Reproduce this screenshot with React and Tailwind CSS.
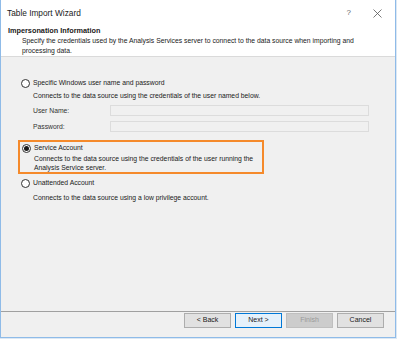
import React from 'react';

function Radio({ checked }) {
    return (
        <span className="w-[9px] h-[9px] rounded-full border border-[#333333] bg-white flex items-center justify-center shrink-0">
            {checked && <span className="w-[5px] h-[5px] rounded-full bg-[#1a1a1a]"></span>}
        </span>
    );
}

function Btn({ children, primary, disabled }) {
    const cls = primary
        ? 'border-[#0078d7] bg-[#e5f1fb] text-[#1a1a1a]'
        : disabled
            ? 'border-[#bfbfbf] bg-[#cccccc] text-[#9a9a9a]'
            : 'border-[#adadad] bg-[#e1e1e1] text-[#1a1a1a]';
    return (
        <div className={`w-[47px] h-[15px] border flex items-center justify-center text-[7px] ${cls}`}>{children}</div>
    );
}

export default function App() {
    return (
        <div className="w-[397px] h-[339px] bg-[#dce8f4] overflow-hidden" style={{ fontFamily: '"Liberation Sans", Arial, sans-serif' }}>
            <div className="w-[396px] h-[338px] border-l border-r border-b border-[#8fbbe8] bg-[#f0f0f0] flex flex-col text-[#1a1a1a]">
                {/* title */}
                <div className="bg-white h-[26px] flex items-center px-[6px] shrink-0">
                    <span className="text-[8.3px] text-[#1a1a1a]">Table Import Wizard</span>
                    <span className="ml-auto text-[8px] text-[#666] mr-[22px]">?</span>
                    <svg width="9" height="9" viewBox="0 0 9 9" className="mr-[7px]">
                        <path d="M0.5 0.5 L8.5 8.5 M8.5 0.5 L0.5 8.5" stroke="#555" strokeWidth="0.8" fill="none" />
                    </svg>
                </div>
                {/* header */}
                <div className="bg-white h-[31px] border-b border-[#dadada] pl-[7px] shrink-0">
                    <div className="text-[7.3px] font-bold leading-[10px]">Impersonation Information</div>
                    <div className="pl-[14px] w-[356px] text-[6.8px] leading-[10px]">
                        Specify the credentials used by the Analysis Services server to connect to the data source when importing and processing data.
                    </div>
                </div>
                {/* body */}
                <div className="flex-1 pt-[21px] px-[20px] text-[6.8px]">
                    <div className="flex items-center gap-[3px] h-[10px]">
                        <Radio />
                        <span>Specific Windows user name and password</span>
                    </div>
                    <div className="pl-[12px] mt-[3px] leading-[10px]">Connects to the data source using the credentials of the user named below.</div>
                    <div className="pl-[12px] mt-[4px] flex flex-col gap-[5px]">
                        <div className="flex items-center h-[11px]">
                            <span className="w-[77px] text-[#333] pt-[2px]">User Name:</span>
                            <div className="w-[259px] h-[11px] border border-[#dcdcdc] bg-[#f0f0f0]"></div>
                        </div>
                        <div className="flex items-center h-[11px]">
                            <span className="w-[77px] text-[#333] pt-[2px]">Password:</span>
                            <div className="w-[259px] h-[11px] border border-[#dcdcdc] bg-[#f0f0f0]"></div>
                        </div>
                    </div>
                    <div className="-ml-[3px] mt-[8px] w-[246px] h-[34px] border-2 border-[#f58a2b] pl-[2px] pt-[1px]">
                        <div className="flex items-center gap-[3px] h-[10px]">
                            <Radio checked />
                            <span>Service Account</span>
                        </div>
                        <div className="pl-[12px] pr-[8px] mt-[2px] leading-[8.5px]">
                            Connects to the data source using the credentials of the user running the Analysis Service server.
                        </div>
                    </div>
                    <div className="flex items-center gap-[3px] h-[10px] mt-[4px]">
                        <Radio />
                        <span>Unattended Account</span>
                    </div>
                    <div className="pl-[12px] mt-[5px] leading-[10px]">Connects to the data source using a low privilege account.</div>
                </div>
                {/* footer */}
                <div className="h-[26px] border-t border-[#a0a0a0] flex justify-end gap-[4px] pr-[11px] pt-[1px] shrink-0">
                    <Btn>&lt; Back</Btn>
                    <Btn primary>Next &gt;</Btn>
                    <Btn disabled>Finish</Btn>
                    <Btn>Cancel</Btn>
                </div>
            </div>
        </div>
    );
}
